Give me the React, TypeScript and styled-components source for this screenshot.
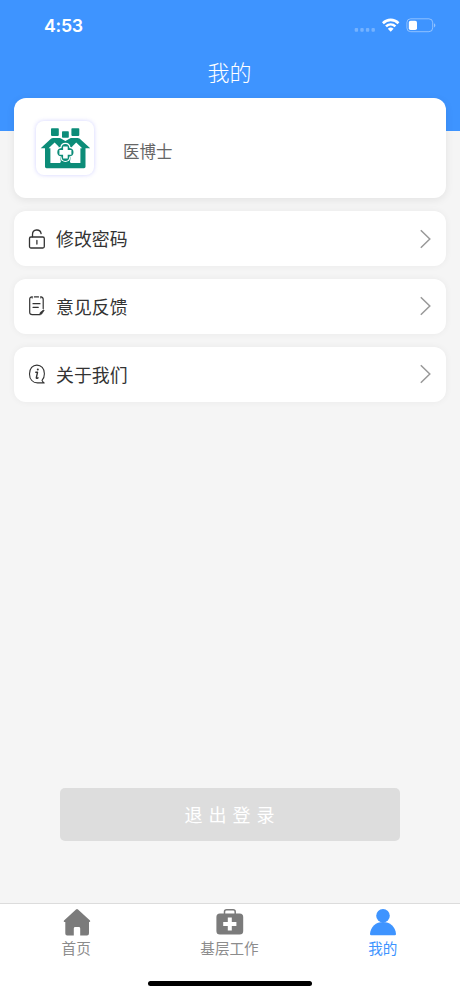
import React from "react";
import styled, { createGlobalStyle } from "styled-components";

const BLUE = "#3e94ff";

const GlobalStyle = createGlobalStyle`
  * { box-sizing: border-box; }
  body {
    margin: 0;
    background: #f5f5f5;
    font-family: "Noto Sans CJK SC", "Liberation Sans", sans-serif;
  }
`;

const Screen = styled.div`
  display: flex;
  flex-direction: column;
  width: 460px;
  height: 996px;
  overflow: hidden;
  background: #f5f5f5;
`;

const Header = styled.header`
  flex: none;
  height: 131px;
  background: ${BLUE};
  color: #fff;
`;

const StatusBar = styled.div`
  display: flex;
  align-items: center;
  justify-content: space-between;
  height: 50px;
  padding: 0 23px 0 44px;
`;

const Clock = styled.span`
  padding-top: 2px;
  font: 600 17.8px/24px Inter, sans-serif;
  letter-spacing: -0.3px;
`;

const Title = styled.h1`
  margin: 5px 0 0;
  padding-right: 1px;
  font-size: 22px;
  font-weight: 300;
  line-height: 32px;
  text-align: center;
`;

const Main = styled.main`
  flex: 1;
  display: flex;
  flex-direction: column;
  gap: 13.4px;
  margin-top: -33px;
  padding: 0 14px;
`;

const ProfileCard = styled.section`
  display: flex;
  align-items: center;
  gap: 29px;
  height: 100px;
  padding: 0 22px;
  border-radius: 12px;
  background: #fff;
  box-shadow: 0 2px 8px rgba(0, 0, 0, 0.08);
`;

const Avatar = styled.div`
  display: flex;
  width: 58px;
  height: 54px;
  border-radius: 8px;
  background: #fff;
  box-shadow: 0 0 4px rgba(95, 95, 255, 0.28);
`;

const Name = styled.span`
  padding-top: 6px;
  font-size: 16.5px;
  line-height: 24px;
  color: #666;
`;

const Menu = styled.nav`
  display: flex;
  flex-direction: column;
  gap: 13.2px;
`;

const MenuRow = styled.a`
  display: flex;
  align-items: center;
  height: 54.6px;
  padding: 0 14px;
  border-radius: 12px;
  background: #fff;
  box-shadow: 0 0 7px rgba(0, 0, 0, 0.05);
  color: #333;
`;

const MenuLabel = styled.span`
  flex: 1;
  margin-left: 10px;
  padding-bottom: 1px;
  font-size: 17.9px;
  line-height: 26px;
`;

const LogoutButton = styled.button`
  width: 340px;
  height: 53px;
  margin: auto auto 62px;
  padding: 0 0 1px 5px;
  border: 0;
  border-radius: 5px;
  background: #ddd;
  color: #fff;
  font: 400 18px/26px "Noto Sans CJK SC", sans-serif;
  letter-spacing: 6px;
`;

const TabBar = styled.footer`
  flex: none;
  height: 93px;
  border-top: 1px solid #dcdcdc;
  background: #fff;
`;

const Tabs = styled.div`
  display: grid;
  grid-template-columns: repeat(3, 1fr);
  height: 77px;
`;

const Tab = styled.div<{ $active?: boolean }>`
  display: flex;
  flex-direction: column;
  align-items: center;
  padding-top: 4px;
  color: ${(p) => (p.$active ? BLUE : "#7b7b7b")};
`;

const TabLabel = styled.span<{ $active?: boolean }>`
  margin-top: 1px;
  padding-right: 1px;
  font-size: 14.6px;
  line-height: 20px;
  color: ${(p) => (p.$active ? BLUE : "#8c8c8c")};
`;

const HomeIndicator = styled.div`
  width: 164px;
  height: 5px;
  margin: 0 auto;
  border-radius: 3px;
  background: #000;
`;

const StatusIcons = () => (
  <svg width="84" height="20" viewBox="353 15 84 20" fill="none">
    <g fill="#fff" opacity="0.28">
      <rect x="354.7" y="28" width="3.4" height="3.8" rx="1" />
      <rect x="360.3" y="28" width="3.4" height="3.8" rx="1" />
      <rect x="365.9" y="28" width="3.4" height="3.8" rx="1" />
      <rect x="371.5" y="28" width="3.4" height="3.8" rx="1" />
    </g>
    <g stroke="#fff" strokeWidth="2.6">
      <path d="M382.9 23.2C387.5 18.8 394 18.8 398.5 23.2" />
      <path d="M386 26.4C388.8 23.8 392.6 23.8 395.4 26.4" />
    </g>
    <path d="M387.8 28.7Q390.7 26.3 393.6 28.7L390.7 31.8Z" fill="#fff" />
    <rect x="406.9" y="18.8" width="25.8" height="12.9" rx="3.8" stroke="#fff" strokeOpacity="0.42" />
    <rect x="408.8" y="20.8" width="8.2" height="9.2" rx="1.8" fill="#fff" />
    <path d="M434 23.2Q436.8 25.3 434 27.4Z" fill="#fff" opacity="0.45" />
  </svg>
);

const PETALS =
  "M61.4 147.8Q61.8 143.8 65.4 143.8Q69 143.8 69.4 147.8Q73.5 148.2 73.5 152Q73.5 155.8 69.4 156.2Q69 160.7 65.4 160.7Q61.8 160.7 61.4 156.2Q57.3 155.8 57.3 152Q57.3 148.2 61.4 147.8Z";

const Logo = () => (
  <svg width="58" height="54" viewBox="36 120.8 58 54">
    <g fill="#0c8c78">
      <rect x="51" y="128" width="7.8" height="7.7" rx="0.8" />
      <rect x="62" y="131" width="6.8" height="6.6" rx="0.8" />
      <rect x="71.4" y="128" width="7.9" height="7.7" rx="0.8" />
      <path d="M40.7 148L51.2 138.4Q52 137.7 53 137.7H60L65.4 140.8L70.8 137.7H77.6Q78.7 137.7 79.5 138.4L90.2 148H85.5V166.6Q85.5 168 84 168H46.5Q45 168 45 166.6V148Z" />
    </g>
    <path d="M50.4 162.7V148H48.6L54.6 142.2L58.6 146.2L61 162.7Z" fill="#fff" />
    <path d="M80.4 162.7V148H82.2L76.2 142.2L72.2 146.2L69.8 162.7Z" fill="#fff" />
    <path d={PETALS} fill="none" stroke="#fff" strokeWidth="2.4" />
    <path d={PETALS} fill="#0c8c78" />
    <path d="M65.4 146.2V158.2M59.4 152.2H71.4" stroke="#fff" strokeWidth="4.6" />
    <path d="M59.8 162.9L62.2 160.8Q65.4 162.8 68.6 160.8L71 162.9Z" fill="#0c8c78" />
  </svg>
);

const LockIcon = () => (
  <svg width="18" height="22" viewBox="0 0 18 22" fill="none" stroke="currentColor" strokeWidth="1.3" strokeLinecap="round">
    <rect x="1.5" y="9" width="14.8" height="11" rx="1.5" />
    <path d="M4.5 8.8V6.5C4.5 .8 12.2 .5 13.1 5.6M8.9 12.5V16" />
  </svg>
);

const NoteIcon = () => (
  <svg width="18" height="22" viewBox="0 0 18 22" fill="none" stroke="currentColor" strokeWidth="1.2" strokeLinecap="round">
    <path d="M11.5 19.6H4.2Q1.7 19.6 1.7 17.2V4.2Q1.7 1.9 4.2 1.9M6.4 1.9H10.5M12.8 1.9Q15.2 2.1 15.2 4.4V13.4M5 8.7H12M5 12.3H10.3" />
    <path d="M11.8 19.6L12 17.7L15.6 14.8L16.1 15.5L13.7 19Z" fill="currentColor" strokeWidth="0.7" />
    <path d="M4.2 1.9V3.2M12.8 1.9V3.2" strokeWidth="0.8" />
  </svg>
);

const InfoIcon = () => (
  <svg width="18" height="22" viewBox="0 0 18 22" fill="none" stroke="currentColor" strokeWidth="1.1" strokeLinecap="round" strokeLinejoin="round">
    <path d="M16.2 19.9H10C4.8 20.1 1.5 16.3 1.5 10.9C1.5 5.5 4.7 2.1 8.9 2.1C13.2 2.1 16.4 5.6 16.4 10.7C16.4 13.6 15.6 15.8 14 17.4Q14.7 19.1 16.2 19.9Z" />
    <path d="M7.8 9.3H9.5L8.3 14.8Q8.3 15.8 10 14.8" strokeWidth="1.4" />
    <circle cx="9.8" cy="6.5" r="1" fill="currentColor" stroke="none" />
  </svg>
);

const Chevron = () => (
  <svg width="12" height="20" viewBox="0 0 12 20" fill="none" stroke="#999" strokeWidth="1.5">
    <path d="M0.8 1.2L9.8 10L0.8 18.8" />
  </svg>
);

const HomeIcon = () => (
  <svg width="30" height="29" viewBox="0 0 30 29" fill="currentColor">
    <path d="M14 1.4Q15 .5 16 1.4L28 12.6Q28.8 13.8 27.4 14H27V25.2Q27 27.4 25 27.4H18.2V20.4Q18.2 19 16.8 19H13.2Q11.8 19 11.8 20.4V27.4H5.2Q3.3 27.4 3.3 25.4V14H2.4Q1.1 13.7 2 12.6Z" />
  </svg>
);

const MedicalIcon = () => (
  <svg width="30" height="29" viewBox="0 0 30 29">
    <path d="M9.5 7V3.8Q9.5 1.7 11.6 1.7H18.1Q20.2 1.7 20.2 3.8V7" fill="none" stroke="currentColor" strokeWidth="1.5" />
    <rect x="1.4" y="5.6" width="26.8" height="20.9" rx="3.5" fill="currentColor" />
    <path d="M14.8 9.6V22.6M8.2 16.1H21.4" stroke="#fff" strokeWidth="4" />
  </svg>
);

const UserIcon = () => (
  <svg width="30" height="29" viewBox="0 0 30 29" fill="currentColor">
    <circle cx="15" cy="7.8" r="6.8" />
    <path d="M2 26C2.6 18.6 8 14 15 14C22 14 27.4 18.6 28 26Q28 27.2 26.8 27.2H3.2Q2 27.2 2 26Z" />
  </svg>
);

const menuItems = [
  { label: "修改密码", Icon: LockIcon },
  { label: "意见反馈", Icon: NoteIcon },
  { label: "关于我们", Icon: InfoIcon },
];

const tabs = [
  { label: "首页", Icon: HomeIcon, active: false },
  { label: "基层工作", Icon: MedicalIcon, active: false },
  { label: "我的", Icon: UserIcon, active: true },
];

export default function App() {
  return (
    <Screen>
      <GlobalStyle />
      <Header>
        <StatusBar>
          <Clock>4:53</Clock>
          <StatusIcons />
        </StatusBar>
        <Title>我的</Title>
      </Header>
      <Main>
        <ProfileCard>
          <Avatar>
            <Logo />
          </Avatar>
          <Name>医博士</Name>
        </ProfileCard>
        <Menu>
          {menuItems.map(({ label, Icon }) => (
            <MenuRow key={label}>
              <Icon />
              <MenuLabel>{label}</MenuLabel>
              <Chevron />
            </MenuRow>
          ))}
        </Menu>
        <LogoutButton>退出登录</LogoutButton>
      </Main>
      <TabBar>
        <Tabs>
          {tabs.map(({ label, Icon, active }) => (
            <Tab key={label} $active={active}>
              <Icon />
              <TabLabel $active={active}>{label}</TabLabel>
            </Tab>
          ))}
        </Tabs>
        <HomeIndicator />
      </TabBar>
    </Screen>
  );
}
